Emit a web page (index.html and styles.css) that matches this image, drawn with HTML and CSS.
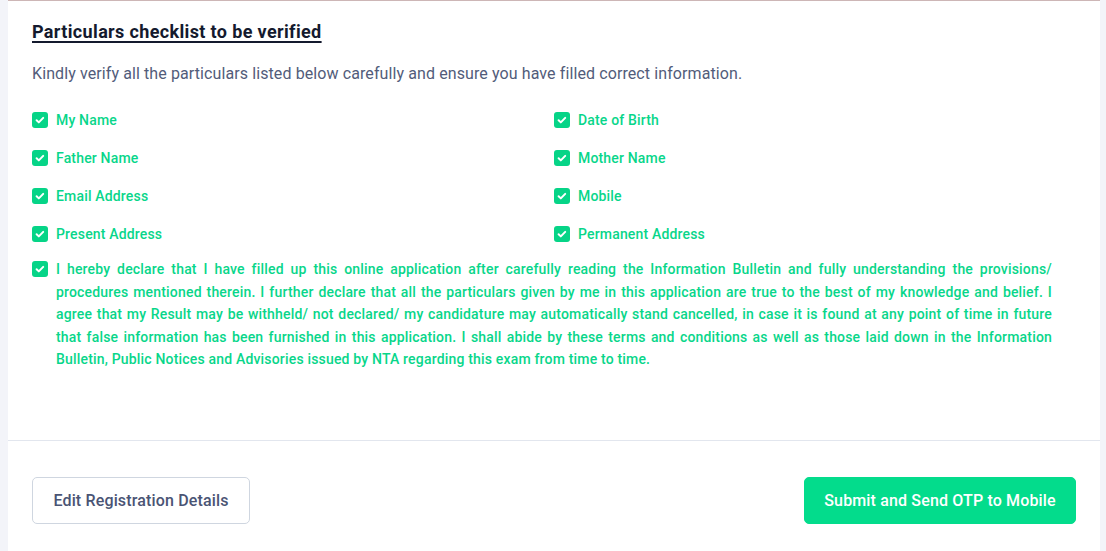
FILE: index.html
```html
<!DOCTYPE html>
<html>
<head>
<meta charset="utf-8">
<link rel="stylesheet" href="styles.css">
</head>
<body>
<div class="page">
  <div class="card">
    <div class="content">
      <h2 class="title">Particulars checklist to be verified</h2>
      <p class="subtitle">Kindly verify all the particulars listed below carefully and ensure you have filled correct information.</p>
      <div class="grid">
        <label class="item"><span class="box"><svg viewBox="0 0 16 16" width="16" height="16"><path d="M4.6 8.3l2.2 2.1 4.4-4.5" fill="none" stroke="#fff" stroke-width="2" stroke-linecap="round" stroke-linejoin="round"/></svg></span>My Name</label>
        <label class="item"><span class="box"><svg viewBox="0 0 16 16" width="16" height="16"><path d="M4.6 8.3l2.2 2.1 4.4-4.5" fill="none" stroke="#fff" stroke-width="2" stroke-linecap="round" stroke-linejoin="round"/></svg></span>Date of Birth</label>
        <label class="item"><span class="box"><svg viewBox="0 0 16 16" width="16" height="16"><path d="M4.6 8.3l2.2 2.1 4.4-4.5" fill="none" stroke="#fff" stroke-width="2" stroke-linecap="round" stroke-linejoin="round"/></svg></span>Father Name</label>
        <label class="item"><span class="box"><svg viewBox="0 0 16 16" width="16" height="16"><path d="M4.6 8.3l2.2 2.1 4.4-4.5" fill="none" stroke="#fff" stroke-width="2" stroke-linecap="round" stroke-linejoin="round"/></svg></span>Mother Name</label>
        <label class="item"><span class="box"><svg viewBox="0 0 16 16" width="16" height="16"><path d="M4.6 8.3l2.2 2.1 4.4-4.5" fill="none" stroke="#fff" stroke-width="2" stroke-linecap="round" stroke-linejoin="round"/></svg></span>Email Address</label>
        <label class="item"><span class="box"><svg viewBox="0 0 16 16" width="16" height="16"><path d="M4.6 8.3l2.2 2.1 4.4-4.5" fill="none" stroke="#fff" stroke-width="2" stroke-linecap="round" stroke-linejoin="round"/></svg></span>Mobile</label>
        <label class="item"><span class="box"><svg viewBox="0 0 16 16" width="16" height="16"><path d="M4.6 8.3l2.2 2.1 4.4-4.5" fill="none" stroke="#fff" stroke-width="2" stroke-linecap="round" stroke-linejoin="round"/></svg></span>Present Address</label>
        <label class="item"><span class="box"><svg viewBox="0 0 16 16" width="16" height="16"><path d="M4.6 8.3l2.2 2.1 4.4-4.5" fill="none" stroke="#fff" stroke-width="2" stroke-linecap="round" stroke-linejoin="round"/></svg></span>Permanent Address</label>
      </div>
      <label class="declare"><span class="box"><svg viewBox="0 0 16 16" width="16" height="16"><path d="M4.6 8.3l2.2 2.1 4.4-4.5" fill="none" stroke="#fff" stroke-width="2" stroke-linecap="round" stroke-linejoin="round"/></svg></span><span class="declare-text">I hereby declare that I have filled up this online application after carefully reading the Information Bulletin and fully understanding the provisions/ procedures mentioned therein. I further declare that all the particulars given by me in this application are true to the best of my knowledge and belief. I agree that my Result may be withheld/ not declared/ my candidature may automatically stand cancelled, in case it is found at any point of time in future that false information has been furnished in this application. I shall abide by these terms and conditions as well as those laid down in the Information Bulletin, Public Notices and Advisories issued by NTA regarding this exam from time to time.</span></label>
    </div>
    <div class="footer">
      <button class="btn btn-outline">Edit Registration Details</button>
      <button class="btn btn-primary">Submit and Send OTP to Mobile</button>
    </div>
  </div>
</div>
</body>
</html>
```
FILE: styles.css
```css
* { box-sizing: border-box; }
html, body { margin: 0; padding: 0; }
body {
  background: #f3f4f9;
  font-family: "Roboto", "Liberation Sans", sans-serif;
  width: 1106px;
  height: 551px;
  overflow: hidden;
}
.page {
  padding: 0 6px 0 8px;
  height: 551px;
}
.card {
  background: #fff;
  border-top: 1px solid #cdb6b6;
  height: 100%;
}
.content {
  padding: 20px 24px 0 24px;
  height: 439px;
}
.title {
  margin: 0;
  font-size: 18px;
  font-weight: 700;
  color: #141a2e;
  letter-spacing: 0.36px;
  text-decoration: underline;
  text-underline-offset: 3px;
  text-decoration-thickness: 2px;
  line-height: 22px;
}
.subtitle {
  margin: 19px 0 0 0;
  font-size: 16px;
  line-height: 24px;
  letter-spacing: 0.1px;
  color: #525c7a;
}
.grid {
  display: grid;
  grid-template-columns: 1fr 1fr;
  row-gap: 18px;
  margin-top: 24px;
}
.item {
  display: flex;
  align-items: center;
  gap: 8px;
  font-size: 14px;
  font-weight: 500;
  letter-spacing: 0.17px;
  color: #08d68a;
  line-height: 20px;
}
.box {
  width: 16px;
  height: 16px;
  border-radius: 3px;
  background: #06d487;
  display: inline-flex;
  flex: none;
}
.box svg { display: block; }
.declare {
  display: flex;
  gap: 8px;
  margin-top: 14px;
  padding-right: 24px;
}
.declare .box { margin-top: 3px; }
.declare-text {
  font-size: 14px;
  font-weight: 500;
  line-height: 22.5px;
  letter-spacing: 0.18px;
  color: #08d68a;
  text-align: justify;
}
.footer {
  border-top: 1px solid #e2e6ee;
  display: flex;
  justify-content: space-between;
  align-items: flex-start;
  padding: 36px 24px 0 24px;
}
.btn {
  height: 47px;
  font-family: inherit;
  font-size: 16px;
  font-weight: 500;
  letter-spacing: 0.15px;
  border-radius: 5px;
  padding: 0;
  white-space: nowrap;
  cursor: pointer;
}
.btn-outline {
  background: #fff;
  border: 1px solid #cfd6e0;
  color: #4a5474;
  width: 218px;
}
.btn-primary {
  background: #03dc8c;
  border: 1px solid #03dc8c;
  color: #fff;
  width: 272px;
}
```
